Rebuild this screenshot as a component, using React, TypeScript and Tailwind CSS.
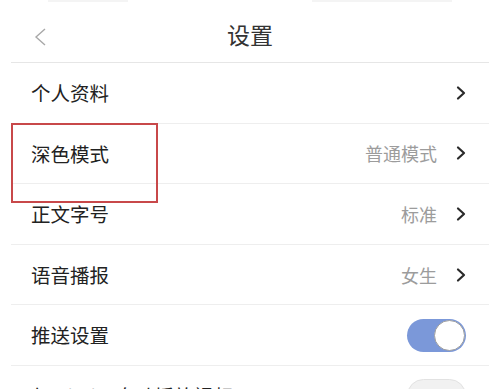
import React from "react";

const Chevron = () => (
  <svg width="10" height="16" viewBox="0 0 10 16" className="shrink-0">
    <polyline points="2,2.5 8,8 2,13.5" fill="none" stroke="#2a2a2a" strokeWidth="2.2" strokeLinecap="round" strokeLinejoin="round" />
  </svg>
);

type Row = { label: string; value?: string; toggle?: "on" | "off" };

const rows: Row[] = [
  { label: "个人资料", value: "" },
  { label: "深色模式", value: "普通模式" },
  { label: "正文字号", value: "标准" },
  { label: "语音播报", value: "女生" },
  { label: "推送设置", toggle: "on" },
  { label: "仅Wi-Fi下自动播放视频", toggle: "off" },
];

export default function App() {
  return (
    <div
      className="relative w-[500px] h-[389px] overflow-hidden bg-white text-[#222]"
      style={{ fontFamily: '"Noto Sans CJK SC", "Noto Sans", sans-serif' }}
    >
      <div className="h-[3px] flex justify-between px-[48px]">
        <div className="w-[80px] h-[2px] bg-[#f4f4f4]" />
        <div className="w-[140px] h-[2px] bg-[#f4f4f4]" />
      </div>
      <div className="mx-[11px] h-[60px] border-b border-[#e6e6e6] flex items-center relative pt-[4px]">
        <svg width="14" height="20" viewBox="0 0 14 20" className="absolute left-[22px] top-[24px]">
          <polyline points="12,2 3,10 12,18" fill="none" stroke="#a8a8a8" strokeWidth="1.4" />
        </svg>
        <div className="flex-1 text-center text-[23px] text-[#333] leading-none">设置</div>
      </div>
      <div className="mx-[11px]">
        {rows.map((r, i) => (
          <div
            key={i}
            className="h-[60.6px] border-b border-[#eeeeee] flex items-center justify-between pl-[20px] pr-[23px]"
          >
            <span className="text-[19.5px] leading-none">{r.label}</span>
            {r.toggle === "on" ? (
              <div className="w-[59px] h-[33px] rounded-full bg-[#7b98d9] flex items-center justify-end pr-[1px]">
                <div className="w-[31px] h-[31px] rounded-full bg-white border-[1.5px] border-[#a0a0a0]" />
              </div>
            ) : r.toggle === "off" ? (
              <div className="w-[59px] h-[33px] rounded-full bg-[#f1f1f1] border border-[#e2e2e2]" />
            ) : (
              <div className="flex items-center gap-[19px]">
                {r.value ? <span className="text-[18px] text-[#9c9c9c] leading-none">{r.value}</span> : null}
                <Chevron />
              </div>
            )}
          </div>
        ))}
      </div>
      <div className="absolute left-[11px] top-[123px] w-[147px] h-[80px] border-[2px] border-[#c8484a]" />
    </div>
  );
}
